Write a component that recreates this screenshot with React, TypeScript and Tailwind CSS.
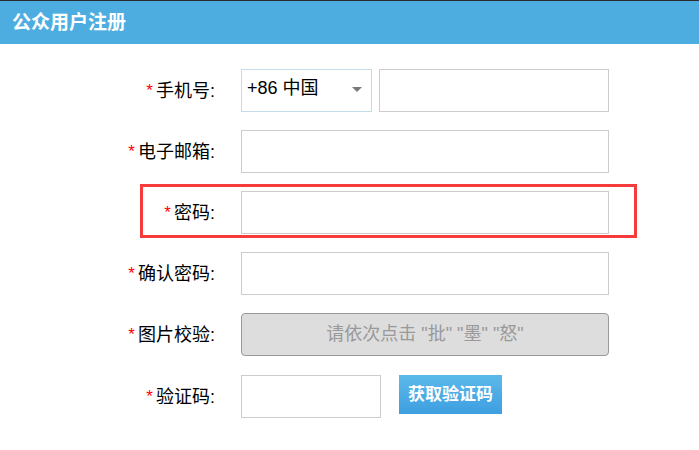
import React from "react";

const font = { fontFamily: '"Liberation Sans", "Noto Sans CJK SC", sans-serif' };

function Label({ text }: { text: string }) {
  return (
    <div className="w-[215px] shrink-0 flex items-center justify-end text-[18px] text-black leading-none">
      <span className="text-[#ff0000] text-[17px] mr-[3px] -mt-[1px]">*</span>
      <span>{text}:</span>
    </div>
  );
}

export default function App() {
  return (
    <div className="w-[699px] h-[450px] bg-white overflow-hidden" style={font}>
      <div className="h-[1px] bg-[#2b2b2b]" />
      <div className="h-[43px] bg-[#4eade0] flex items-center pl-[12px]">
        <span className="text-white font-bold text-[19px] leading-none">公众用户注册</span>
      </div>
      <div className="pt-[25px]">
        {/* row 1 */}
        <div className="flex h-[43px] mb-[18px]">
          <Label text="手机号" />
          <div className="ml-[26px] flex">
            <div className="w-[131px] h-[43px] border border-[#c4dcea] flex items-center justify-between pl-[5px] pr-[9px] text-[18px] text-black">
              <span className="-mt-[4px]">+86 中国</span>
              <span className="w-0 h-0 border-l-[5px] border-r-[5px] border-t-[5px] border-l-transparent border-r-transparent border-t-[#7a7a7a] -mt-[2px]" />
            </div>
            <div className="ml-[7px] w-[230px] h-[43px] border border-[#cccccc]" />
          </div>
        </div>
        {/* row 2 */}
        <div className="flex h-[43px] mb-[18px]">
          <Label text="电子邮箱" />
          <div className="ml-[26px] w-[368px] h-[43px] border border-[#cccccc]" />
        </div>
        {/* row 3 */}
        <div className="relative flex h-[43px] mb-[18px]">
          <div className="absolute left-[140px] top-[-7px] w-[497px] h-[54px] border-[3px] border-[#f53b3b]" />
          <Label text="密码" />
          <div className="ml-[26px] w-[368px] h-[43px] border border-[#cccccc]" />
        </div>
        {/* row 4 */}
        <div className="flex h-[43px] mb-[18px]">
          <Label text="确认密码" />
          <div className="ml-[26px] w-[368px] h-[43px] border border-[#cccccc]" />
        </div>
        {/* row 5 */}
        <div className="flex h-[43px] mb-[19px]">
          <Label text="图片校验" />
          <div className="ml-[26px] w-[368px] h-[43px] border border-[#999999] rounded-[4px] bg-[#dddddd] flex items-center justify-center text-[18px] text-[#999999]">
            请依次点击 "批" "墨" "怒"
          </div>
        </div>
        {/* row 6 */}
        <div className="flex h-[43px]">
          <Label text="验证码" />
          <div className="ml-[26px] w-[140px] h-[43px] border border-[#cccccc]" />
          <div className="ml-[18px] w-[103px] h-[39px] bg-gradient-to-b from-[#5cb9ea] to-[#3e9ee0] flex items-center justify-center text-white font-bold text-[17px]">
            获取验证码
          </div>
        </div>
      </div>
    </div>
  );
}
